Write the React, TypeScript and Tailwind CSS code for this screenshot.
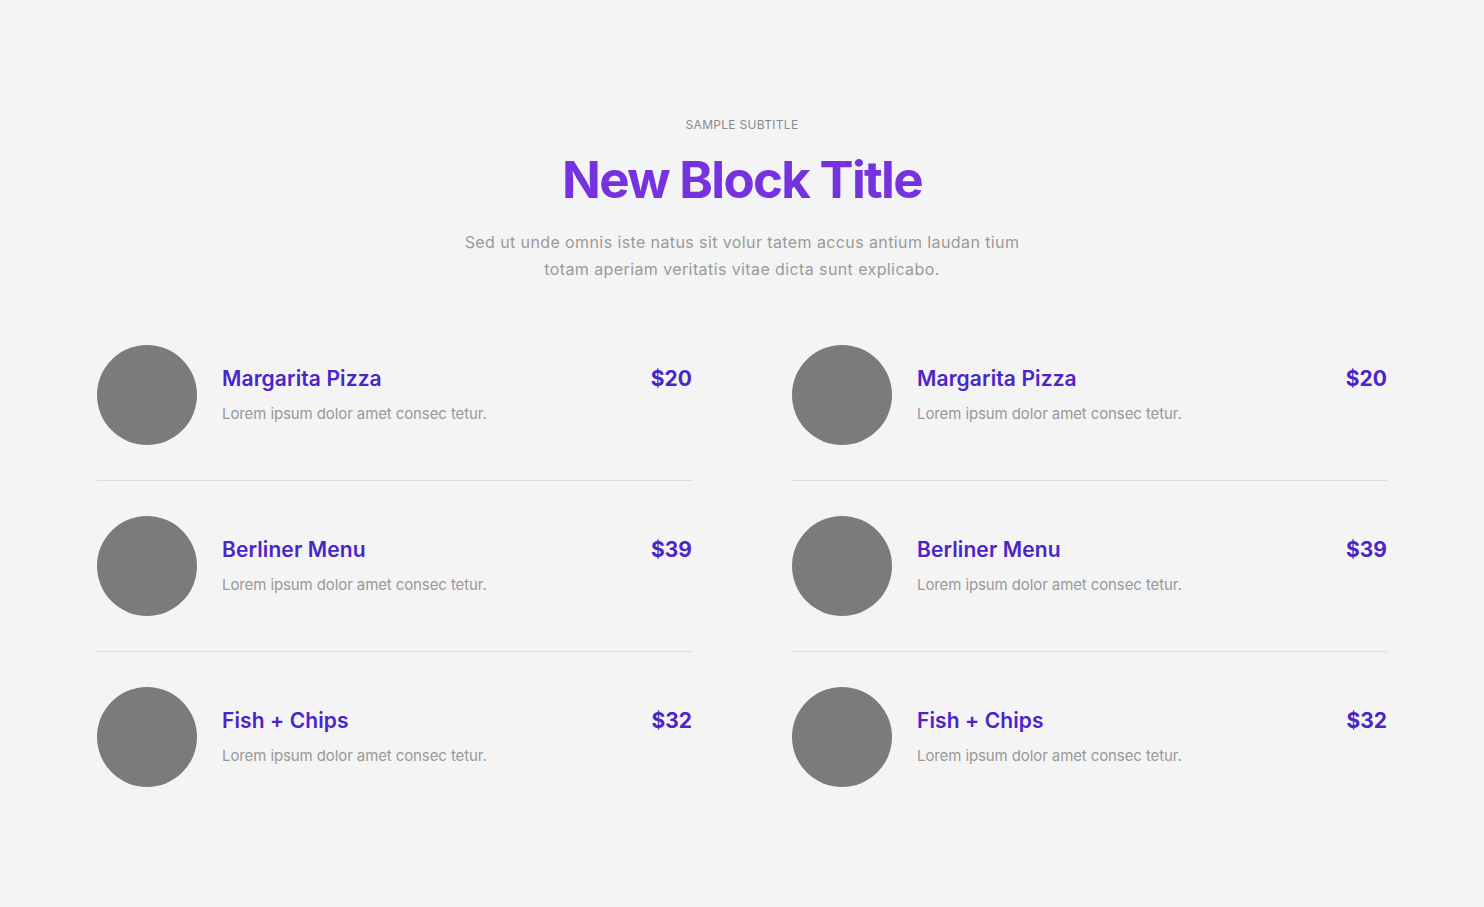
import React from "react";

const items = [
  { name: "Margarita Pizza", price: "$20" },
  { name: "Berliner Menu", price: "$39" },
  { name: "Fish + Chips", price: "$32" },
];

function Column() {
  return (
    <div className="flex flex-col">
      {items.map((it, i) => (
        <div
          key={i}
          className={`flex items-start gap-[25px] ${i < items.length - 1 ? "border-b border-[#dcdcdc] pb-[35px]" : ""} ${i > 0 ? "pt-[35px]" : ""}`}
        >
          <div className="w-[100px] h-[100px] rounded-full bg-[#7b7b7b] shrink-0" />
          <div className="flex-1 flex flex-col pt-[21px]">
            <div className="flex justify-between items-center">
              <div className="text-[21px] leading-[26px] font-semibold text-[#4b25c8] tracking-[0.1px]">{it.name}</div>
              <div className="text-[21px] leading-[26px] font-bold text-[#4b25c8] tracking-[0px]">{it.price}</div>
            </div>
            <div className="mt-[12px] text-[15px] leading-[20px] text-[#999999] tracking-[-0.1px]">
              Lorem ipsum dolor amet consec tetur.
            </div>
          </div>
        </div>
      ))}
    </div>
  );
}

export default function App() {
  return (
    <div
      className="min-h-[907px] bg-[#f4f4f4] flex flex-col items-center pt-[117px]"
      style={{ fontFamily: "Inter, 'Noto Sans', sans-serif" }}
    >
      <div className="text-[12px] leading-[15px] uppercase text-[#8a8a8a] tracking-[0.3px]">Sample Subtitle</div>
      <h1 className="mt-[20px] text-[51px] leading-[56px] font-bold text-[#7433de] tracking-[-1.7px]">New Block Title</h1>
      <p className="mt-[21px] text-[16px] leading-[27px] text-[#9a9a9a] text-center w-[640px] tracking-[0.4px]">
        Sed ut unde omnis iste natus sit volur tatem accus antium laudan tium
        <br />
        totam aperiam veritatis vitae dicta sunt explicabo.
      </p>
      <div className="mt-[62px] w-[1290px] grid grid-cols-2 gap-[100px]">
        <Column />
        <Column />
      </div>
    </div>
  );
}
